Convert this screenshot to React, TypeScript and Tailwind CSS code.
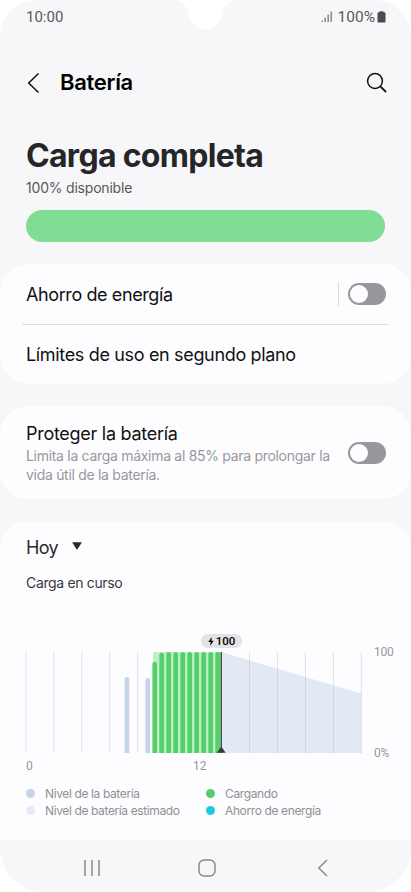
import { useState } from 'react';

// Barras de nivel: posición x y altura superior dentro del gráfico
const levelBars = [
  { x: 101.2, top: 25 },
  { x: 122, top: 26 },
];

const chargingBars = [
  { x: 129, top: 9.7 },
  { x: 136, top: 0.8 },
  { x: 143, top: 0 },
  { x: 150, top: 0 },
  { x: 157, top: 0 },
  { x: 164, top: 0 },
  { x: 171, top: 0 },
  { x: 178, top: 0 },
  { x: 185, top: 0 },
  { x: 192, top: 0 },
];

const gridLines = [0, 1, 2, 3, 4, 8, 9, 10, 11, 12];

const legend = [
  { label: 'Nivel de la batería', color: 'bg-[#c6d3e8]' },
  { label: 'Cargando', color: 'bg-[#55cf69]' },
  { label: 'Nivel de batería estimado', color: 'bg-[#e6eaf6]' },
  { label: 'Ahorro de energía', color: 'bg-[#1dc8e0]' },
];

function barPath(x: number, top: number, w: number) {
  const r = w / 2;
  return `M${x - r} 101V${top + r}a${r} ${r} 0 0 1 ${w} 0V101Z`;
}

function Toggle({ label }: { label: string }) {
  const [on, setOn] = useState(false);
  return (
    <button
      role="switch"
      aria-checked={on}
      aria-label={label}
      onClick={() => setOn(!on)}
      className={`flex h-[22px] w-[38px] shrink-0 items-center rounded-full p-[2px] ${on ? 'justify-end bg-[#55cf69]' : 'bg-[#98979c]'}`}
    >
      <span className="size-[18px] rounded-full bg-[#fdfdff]" />
    </button>
  );
}

function StatusBar() {
  return (
    <div className="flex h-[34px] items-center justify-between pl-[26px] pr-[25px] font-['Roboto',sans-serif] text-[15px] text-[#58585a]">
      <span className="leading-[34px]">10:00</span>
      <div className="flex items-center">
        <svg width="12" height="12" viewBox="0 0 12 12" className="mr-[5px]" fill="#77777a">
          <rect x="0.5" y="9.5" width="1.3" height="1.5" />
          <rect x="3.5" y="6.5" width="1.3" height="4.5" />
          <rect x="6.5" y="3.5" width="1.3" height="7.5" />
          <rect x="9.5" y="0.5" width="1.3" height="10.5" />
        </svg>
        <span className="text-[15.5px] leading-[34px]">100%</span>
        <svg width="9" height="12" viewBox="0 0 9 12" className="ml-[2px]" fill="#4b4b4d">
          <path d="M2.5 1.2V.8Q2.5.2 3.1.2h2.8q.6 0 .6.6v.4h.8q1.2 0 1.2 1.2v8q0 1.2-1.2 1.2H1.7Q.5 11.6.5 10.4v-8q0-1.2 1.2-1.2Z" />
        </svg>
      </div>
    </div>
  );
}

function BatteryChart() {
  return (
    <div>
      <div className="flex">
        <div className="relative">
          <svg width="337" height="102" viewBox="-0.7 0 337 102" className="block">
            <polygon points="195.8,0 335.5,41.5 335.5,101 195.8,101" fill="#e3e9f4" />
            {gridLines.map((i) => (
              <rect key={i} x={i * 27.95 - 0.3} y="0" width="1" height="101" fill="#b4b8c2" fillOpacity="0.4" />
            ))}
            {levelBars.map((b) => (
              <path key={b.x} d={barPath(b.x, b.top, 4.6)} fill="#c7d3e8" />
            ))}
            <rect x="127.4" y="0" width="68" height="101" fill="#bdf0c5" />
            {chargingBars.map((b) => (
              <path key={b.x} d={barPath(b.x, b.top, 4.7)} fill="#55cf69" />
            ))}
            <rect x="194.9" y="0" width="1.4" height="101" fill="#3d4f44" />
            <path d="M195.6 94.5L200 100.8H191.2Z" fill="#38383a" />
          </svg>
          <div className="absolute -top-[18px] left-[176px] flex h-[14px] w-[41px] items-center justify-center gap-[2px] rounded-full bg-[#e3e3e5]">
            <svg width="6" height="9" viewBox="0 0 6 9" fill="#000">
              <path d="M3.8 0L.3 5H2.7L2 9L5.7 3.7H3.4Z" />
            </svg>
            <span className="font-['Roboto',sans-serif] text-[11.5px] font-medium leading-[14px] text-black">100</span>
          </div>
        </div>
        <div className="-my-[8px] ml-[12px] flex flex-col justify-between font-['Roboto',sans-serif] text-[12px] leading-[16px] tracking-[-0.2px] text-[#97979b]">
          <span>100</span>
          <span className="-mt-px mb-px">0%</span>
        </div>
      </div>
      <div className="mt-[4px] flex pl-px font-['Roboto',sans-serif] text-[12px] leading-[16px] text-[#97979b]">
        <span className="w-[167px]">0</span>
        <span>12</span>
      </div>
    </div>
  );
}

export default function App() {
  return (
    <div className="h-[892px] w-[411px] overflow-hidden bg-white font-['Inter',sans-serif]">
      <div className="relative flex h-full flex-col overflow-hidden rounded-t-[37px] rounded-b-[44px] bg-[#f7f7f9]">
        <StatusBar />
        {/* Muesca de la cámara */}
        <svg width="72" height="30" viewBox="0 0 72 30" className="absolute left-[170px] top-0" fill="#fff">
          <path d="M0 0C10 0 15 3 17.5 11C20 22 26 29 36 29C46 29 51.5 22 53.5 11C55.5 3 60 0 70 0Z" />
        </svg>

        {/* Cabecera */}
        <header className="mt-[26px] flex h-[45px] items-center pl-[26px] pr-[24px]">
          <svg width="14" height="22" viewBox="0 0 14 22" fill="none" stroke="#111" strokeWidth="1.5">
            <path d="M12.5 1.5L2.7 11L12.5 20.5" />
          </svg>
          <h1 className="ml-[20px] text-[22px] font-semibold tracking-[-0.3px] text-black">Batería</h1>
          <svg width="21" height="21" viewBox="0 0 21 21" fill="none" stroke="#111" strokeWidth="1.5" className="ml-auto">
            <circle cx="9" cy="9" r="7.4" />
            <path d="M14.3 14.3L20 20" strokeWidth="1.8" />
          </svg>
        </header>

        {/* Estado de la carga */}
        <section className="mt-[31px] pl-[26px] pr-[26px]">
          <h2 className="text-[32px] font-bold leading-[40px] tracking-[-0.7px] text-[#262628]">Carga completa</h2>
          <p className="mt-[2px] text-[14px] leading-[20px] tracking-[-0.2px] text-[#58585a]">100% disponible</p>
          <div className="mt-[12px] h-[32px] rounded-full bg-[#82dd94]" />
        </section>

        <section className="mt-[22px] h-[120px] shrink-0 rounded-[28px] bg-[#fdfdff] px-[22px]">
          <div className="flex h-[60px] items-center pl-[4px] pr-[3px]">
            <span className="text-[18px] tracking-[-0.4px] text-[#111]">Ahorro de energía</span>
            <span className="ml-auto mr-[9px] h-[24px] w-px bg-[#d9d9dc]" />
            <Toggle label="Ahorro de energía" />
          </div>
          <div className="flex h-[60px] items-center border-t border-[#dddde0] pl-[4px]">
            <span className="text-[18px] tracking-[-0.34px] text-[#111]">Límites de uso en segundo plano</span>
          </div>
        </section>

        <section className="mt-[22px] flex h-[93px] shrink-0 items-center justify-between rounded-[28px] bg-[#fdfdff] pl-[26px] pr-[25px]">
          <div>
            <h3 className="text-[18px] leading-[24px] tracking-[-0.28px] text-[#111]">Proteger la batería</h3>
            <p className="w-[310px] whitespace-nowrap text-[14px] leading-[19px] tracking-[-0.3px] text-[#98989c]">
              Limita la carga máxima al 85% para prolongar la
              <br />
              vida útil de la batería.
            </p>
          </div>
          <Toggle label="Proteger la batería" />
        </section>

        <section className="mt-[22px] h-[319px] shrink-0 rounded-t-[28px] bg-[#fdfdff] pl-[25px] pr-[16px] pt-[14px]">
          <button className="flex h-[24px] items-center gap-[14px] pl-px text-[18px] tracking-[-0.6px] text-[#2b2b2d]">
            Hoy
            <svg width="10" height="8" viewBox="0 0 10 8" fill="#2b2b2d" className="-mt-[2px]">
              <path d="M.6.3h8.8q.5 0 .2.5L5.5 7.2q-.5.6-1 0L.4.8Q.1.3.6.3Z" />
            </svg>
          </button>
          <p className="mt-[14px] pl-px text-[14px] leading-[20px] tracking-[-0.35px] text-[#38383a]">Carga en curso</p>
          <div className="mt-[59px]">
            <BatteryChart />
          </div>
          <ul className="mt-[11px] grid grid-cols-[180px_1fr] pl-px">
            {legend.map((item) => (
              <li key={item.label} className="flex h-[17px] items-center gap-[10px]">
                <span className={`size-[9px] rounded-full ${item.color}`} />
                <span className="whitespace-nowrap text-[12px] tracking-[-0.38px] text-[#909094]">{item.label}</span>
              </li>
            ))}
          </ul>
        </section>

        {/* Barra de navegación */}
        <nav className="flex h-[52px] shrink-0 items-center pb-px pl-[83px] pt-[5px]">
          <svg width="18" height="18" viewBox="0 0 18 18" stroke="#8b8b8e" strokeWidth="1.5">
            <path d="M2 1v16M9 1v16M16 1v16" />
          </svg>
          <svg width="18" height="18" viewBox="0 0 18 18" fill="none" stroke="#8b8b8e" strokeWidth="1.5" className="ml-[97px]">
            <rect x="1" y="1" width="16" height="16" rx="5" />
          </svg>
          <svg width="12" height="18" viewBox="0 0 12 18" fill="none" stroke="#8b8b8e" strokeWidth="1.5" className="ml-[101px]">
            <path d="M10 1L1.8 9L10 17" />
          </svg>
        </nav>
      </div>
    </div>
  );
}
